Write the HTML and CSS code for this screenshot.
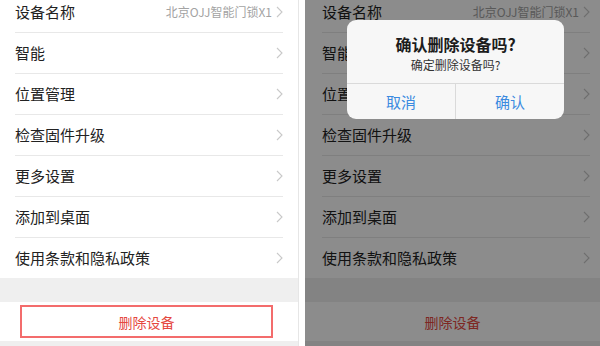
FILE: index.html
```html
<!DOCTYPE html>
<html lang="zh">
<head>
<meta charset="utf-8">
<link rel="stylesheet" href="styles.css">
</head>
<body>
<div class="screen">
  <section class="panel panel-left">
    <ul class="list">
      <li class="row"><span class="label">设备名称</span><span class="value">北京OJJ智能门锁X1</span><svg class="chev" viewBox="0 0 7 12"><polyline points="1,1 6,6 1,11"/></svg></li>
      <li class="row"><span class="label">智能</span><svg class="chev" viewBox="0 0 7 12"><polyline points="1,1 6,6 1,11"/></svg></li>
      <li class="row"><span class="label">位置管理</span><svg class="chev" viewBox="0 0 7 12"><polyline points="1,1 6,6 1,11"/></svg></li>
      <li class="row"><span class="label">检查固件升级</span><svg class="chev" viewBox="0 0 7 12"><polyline points="1,1 6,6 1,11"/></svg></li>
      <li class="row"><span class="label">更多设置</span><svg class="chev" viewBox="0 0 7 12"><polyline points="1,1 6,6 1,11"/></svg></li>
      <li class="row"><span class="label">添加到桌面</span><svg class="chev" viewBox="0 0 7 12"><polyline points="1,1 6,6 1,11"/></svg></li>
      <li class="row row-last"><span class="label">使用条款和隐私政策</span><svg class="chev" viewBox="0 0 7 12"><polyline points="1,1 6,6 1,11"/></svg></li>
    </ul>
    <div class="band"></div>
    <div class="delete-area"><div class="delete-btn highlighted">删除设备</div></div>
    <div class="bottom"></div>
  </section>

  <section class="panel panel-right">
    <ul class="list">
      <li class="row"><span class="label">设备名称</span><span class="value">北京OJJ智能门锁X1</span><svg class="chev" viewBox="0 0 7 12"><polyline points="1,1 6,6 1,11"/></svg></li>
      <li class="row"><span class="label">智能</span><svg class="chev" viewBox="0 0 7 12"><polyline points="1,1 6,6 1,11"/></svg></li>
      <li class="row"><span class="label">位置管理</span><svg class="chev" viewBox="0 0 7 12"><polyline points="1,1 6,6 1,11"/></svg></li>
      <li class="row"><span class="label">检查固件升级</span><svg class="chev" viewBox="0 0 7 12"><polyline points="1,1 6,6 1,11"/></svg></li>
      <li class="row"><span class="label">更多设置</span><svg class="chev" viewBox="0 0 7 12"><polyline points="1,1 6,6 1,11"/></svg></li>
      <li class="row"><span class="label">添加到桌面</span><svg class="chev" viewBox="0 0 7 12"><polyline points="1,1 6,6 1,11"/></svg></li>
      <li class="row row-last"><span class="label">使用条款和隐私政策</span><svg class="chev" viewBox="0 0 7 12"><polyline points="1,1 6,6 1,11"/></svg></li>
    </ul>
    <div class="band"></div>
    <div class="delete-area"><div class="delete-btn">删除设备</div></div>
    <div class="bottom"></div>
    <div class="overlay"></div>
    <div class="dialog">
      <div class="dialog-body">
        <div class="dialog-title">确认删除设备吗?</div>
        <div class="dialog-msg">确定删除设备吗?</div>
      </div>
      <div class="dialog-actions">
        <div class="dialog-btn">取消</div>
        <div class="dialog-btn">确认</div>
      </div>
    </div>
  </section>
</div>
</body>
</html>
```

FILE: styles.css
```css
* { box-sizing: border-box; }
html, body { margin: 0; padding: 0; background: #fff; }
body {
  width: 600px;
  height: 346px;
  overflow: hidden;
  font-family: "Noto Sans CJK SC", "Noto Sans", sans-serif;
}
.screen {
  display: flex;
  gap: 6px;
  height: 346px;
}
.panel {
  display: flex;
  flex-direction: column;
  height: 346px;
  overflow: hidden;
  background: #fff;
}
.panel-left {
  width: 299px;
  border-right: 1px solid #e6e6e6;
}
.panel-right {
  flex: 1;
  position: relative;
}
.list {
  list-style: none;
  margin: -8px 0 0;
  padding: 0;
}
.row {
  display: flex;
  align-items: center;
  height: 41px;
  border-bottom: 1px solid #e8e8e8;
  margin: 0 15px;
}
.panel-right .row { margin: 0 10px 0 17px; }
.row-last { border-bottom: none; height: 40px; }
.label {
  flex: 1;
  font-size: 15px;
  color: #222;
  line-height: 20px;
}
.value {
  font-size: 12px;
  color: #a3a3a3;
  margin-right: 4px;
  line-height: 16px;
}
.chev {
  width: 7px;
  height: 12px;
  fill: none;
  stroke: #c9c9c9;
  stroke-width: 1.1;
}
.band {
  height: 24px;
  background: #efefef;
}
.delete-area {
  height: 39px;
  padding: 3px 25px 3px 20px;
  display: flex;
}
.panel-right .delete-area { padding: 3px 0; }
.delete-btn {
  flex: 1;
  display: flex;
  align-items: center;
  justify-content: center;
  font-size: 14px;
  color: #e5483f;
}
.highlighted { border: 2px solid #f36c6c; }
.bottom {
  flex: 1;
  background: #efefef;
}
.overlay {
  position: absolute;
  inset: 0;
  background: rgba(0, 0, 0, 0.45);
}
.dialog {
  position: absolute;
  left: 42px;
  top: 20px;
  width: 217px;
  background: #f7f7f7;
  border-radius: 9px;
  overflow: hidden;
  text-align: center;
}
.dialog-body {
  padding: 14px 10px 10px;
}
.dialog-title {
  font-size: 16px;
  font-weight: 700;
  line-height: 20px;
  color: #1c1c1c;
}
.dialog-msg {
  margin-top: 3px;
  font-size: 12px;
  line-height: 16px;
  color: #333;
}
.dialog-actions {
  display: flex;
  border-top: 1px solid #dadada;
  height: 36px;
}
.dialog-btn {
  flex: 1;
  display: flex;
  align-items: center;
  justify-content: center;
  font-size: 15px;
  color: #3b8ae0;
}
.dialog-btn + .dialog-btn { border-left: 1px solid #dadada; }
```
